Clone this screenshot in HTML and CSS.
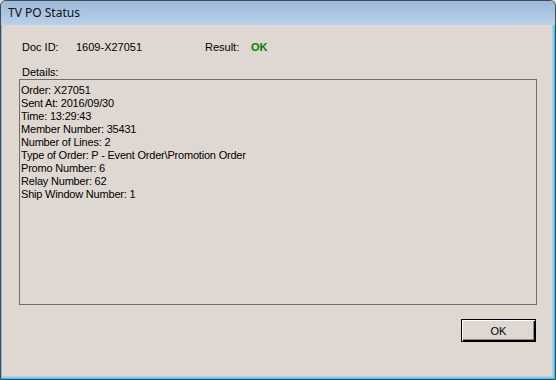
FILE: index.html
```html
<!DOCTYPE html>
<html lang="en">
<head>
  <meta charset="UTF-8" />
  <title>TV PO Status</title>
  <link rel="stylesheet" href="styles.css">
</head>
<body>
  <div class="window">
    <div class="title-bar">TV PO Status</div>
    <div class="client">
      <div class="info-row">
        <span>Doc ID:</span>
        <span>1609-X27051</span>
        <span>Result:</span>
        <span class="result-ok">OK</span>
      </div>

      <div class="details-label">Details:</div>
      <div class="details-box">
        <div>Order: X27051</div>
        <div>Sent At: 2016/09/30</div>
        <div>Time: 13:29:43</div>
        <div>Member Number: 35431</div>
        <div>Number of Lines: 2</div>
        <div>Type of Order: P - Event Order\Promotion Order</div>
        <div>Promo Number: 6</div>
        <div>Relay Number: 62</div>
        <div>Ship Window Number: 1</div>
      </div>

      <div class="button-row">
        <button type="button" class="ok-button">OK</button>
      </div>
    </div>
  </div>
</body>
</html>
```

FILE: styles.css
```css
* {
  box-sizing: border-box;
  margin: 0;
  padding: 0;
}

body {
  font-family: "Liberation Sans", Arial, sans-serif;
  font-size: 11px;
  line-height: 13px;
  color: #000;
  background-color: #dfd7d1;
}

.window {
  width: 556px;
  height: 380px;
  border: 1px solid #3f4a57;
  border-radius: 6px 6px 0 0;
  background-color: #a9c4e1;
  padding: 0 2px 2px 1px;
  display: flex;
  flex-direction: column;
  box-shadow: inset -1px -1px 0 #2fc6f0, inset 1px 0 0 #8fb3d8;
  overflow: hidden;
}

.title-bar {
  height: 24px;
  padding: 4px 0 0 7px;
  margin: 0 -2px 0 -1px;
  font-family: "Noto Sans", "Open Sans", sans-serif;
  font-size: 12px;
  line-height: 16px;
  color: #111;
  background: linear-gradient(#9cb9d8, #b9d1ea);
}

.client {
  flex: 1;
  background-color: #dfd7d1;
  padding: 16px 16px 0 17px;
  border-right: 1px solid #9bd4ee;
  border-bottom: 1px solid #9bd4ee;
}

.info-row {
  display: grid;
  grid-template-columns: 54px 129px 46px auto;
  margin-left: 3px;
}

.result-ok {
  color: #008000;
  font-weight: bold;
}

.details-label {
  margin: 12px 0 0 3px;
}

.details-box {
  width: 518px;
  height: 226px;
  border: 1px solid #6e6e6e;
  padding: 4px 1px;
  letter-spacing: -0.2px;
}

.button-row {
  display: flex;
  justify-content: flex-end;
  margin-top: 14px;
}

.ok-button {
  width: 75px;
  height: 23px;
  font-family: "Liberation Sans", Arial, sans-serif;
  font-size: 11px;
  color: #000;
  background-color: #dfd7d1;
  border: 1px solid #000;
  box-shadow: inset 1px 1px 0 #fff, inset -1px -1px 0 #000, inset -2px -2px 0 #8a8a8a;
}
```
